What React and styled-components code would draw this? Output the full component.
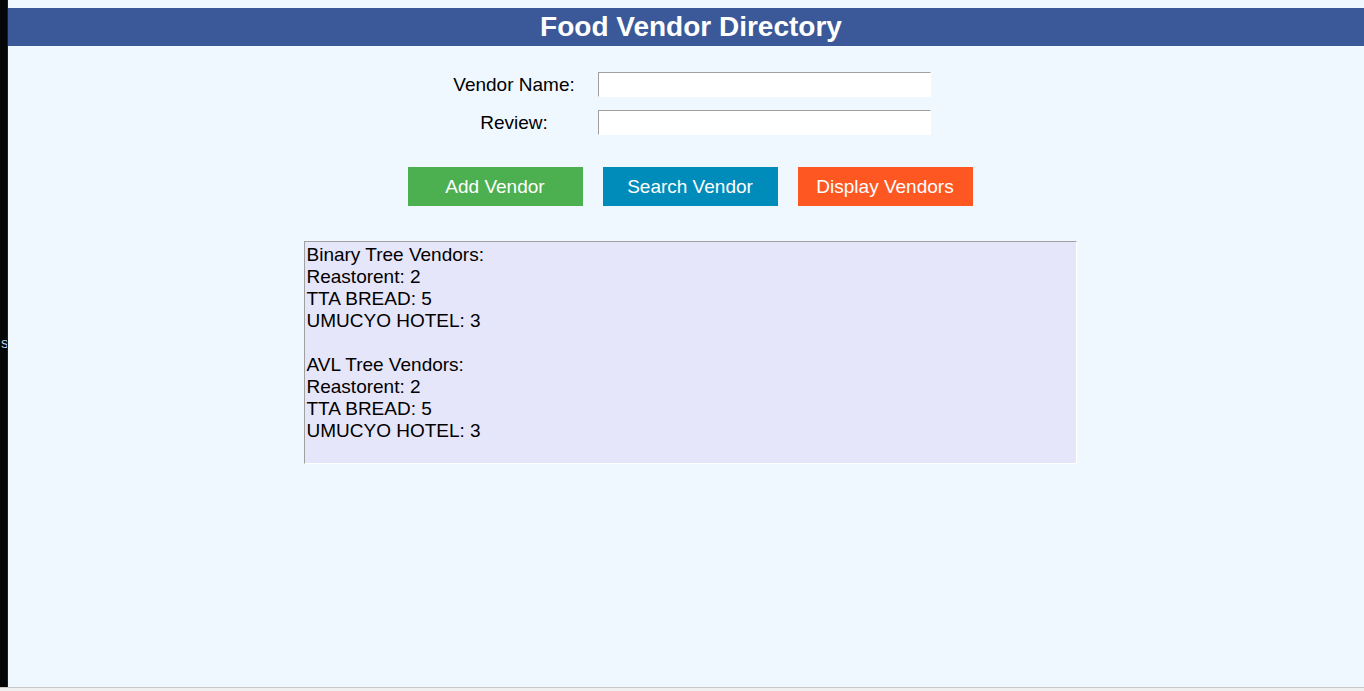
import React, { useState } from 'react';
import styled, { createGlobalStyle } from 'styled-components';

const GlobalStyle = createGlobalStyle`
  html, body {
    margin: 0;
    padding: 0;
    height: 691px;
    overflow: hidden;
    background: #f0f0f0;
  }
  body {
    font-family: "Liberation Sans", Arial, sans-serif;
  }
`;

const vendors = [
  { name: 'Reastorent', review: 2 },
  { name: 'TTA BREAD', review: 5 },
  { name: 'UMUCYO HOTEL', review: 3 },
];

const listing = (title) =>
  `${title}:\n` + vendors.map((v) => `${v.name}: ${v.review}`).join('\n');

function App() {
  const [name, setName] = useState('');
  const [review, setReview] = useState('');

  const output = `${listing('Binary Tree Vendors')}\n\n${listing('AVL Tree Vendors')}\n`;

  return (
    <>
      <GlobalStyle />
      <Window>
        <Body>
          <SideStrip>
            <span>S</span>
          </SideStrip>
          <Main>
            <Header>Food Vendor Directory</Header>
            <Form onSubmit={(e) => e.preventDefault()}>
              <Label htmlFor="vendor">Vendor Name:</Label>
              <Input
                id="vendor"
                value={name}
                onChange={(e) => setName(e.target.value)}
              />
              <Label htmlFor="review">Review:</Label>
              <Input
                id="review"
                value={review}
                onChange={(e) => setReview(e.target.value)}
              />
            </Form>
            <ButtonRow>
              <ActionButton $bg="#4caf50">Add Vendor</ActionButton>
              <ActionButton $bg="#008cba">Search Vendor</ActionButton>
              <ActionButton $bg="#ff5722">Display Vendors</ActionButton>
            </ButtonRow>
            <Output>{output}</Output>
          </Main>
        </Body>
        <BottomEdge />
      </Window>
    </>
  );
}

export default App;

const Window = styled.div`
  display: flex;
  flex-direction: column;
  width: 1364px;
  height: 691px;
`;

const Body = styled.div`
  display: flex;
  height: 687px;
`;

const SideStrip = styled.div`
  width: 8px;
  background: #050608;
  border-right: 1px solid #1e1f22;
  box-sizing: border-box;
  display: flex;
  align-items: center;
  overflow: hidden;
  span {
    font-size: 11px;
    color: #cfe3ff;
    margin-left: 1px;
  }
`;

const Main = styled.div`
  flex: 1;
  background: #f0f8ff;
  padding: 8px 0 0 8px;
  display: flex;
  flex-direction: column;
  align-items: center;
`;

const Header = styled.h1`
  align-self: stretch;
  margin: 0 0 0 -8px;
  height: 38px;
  background: #3b5998;
  color: #fff;
  font-size: 28px;
  font-weight: 700;
  line-height: 38px;
  text-align: center;
  padding-left: 10px;
`;

const Form = styled.form`
  display: grid;
  grid-template-columns: 126px 333px;
  column-gap: 21px;
  row-gap: 13px;
  align-items: center;
  margin-top: 26px;
  margin-left: 2px;
`;

const Label = styled.label`
  font-size: 19px;
  color: #000;
  text-align: center;
`;

const Input = styled.input`
  height: 25px;
  box-sizing: border-box;
  background: #fff;
  border: 1px solid #fff;
  border-top-color: #a0a0a0;
  border-left-color: #a0a0a0;
  font-family: "Liberation Sans", Arial, sans-serif;
  font-size: 16px;
  padding: 0 3px;
  outline: none;
`;

const ButtonRow = styled.div`
  display: flex;
  gap: 20px;
  margin-top: 32px;
`;

const ActionButton = styled.button`
  width: 175px;
  height: 39px;
  border: none;
  background: ${(p) => p.$bg};
  color: #fff;
  font-family: "Liberation Sans", Arial, sans-serif;
  font-size: 19px;
  padding: 0;
  cursor: pointer;
`;

const Output = styled.pre`
  width: 773px;
  height: 223px;
  box-sizing: border-box;
  margin: 35px 0 0;
  padding: 2px 2px;
  background: #e6e6fa;
  border: 1px solid #fff;
  border-top-color: #a0a0a0;
  border-left-color: #a0a0a0;
  font-family: "Liberation Sans", Arial, sans-serif;
  font-size: 19px;
  line-height: 22px;
  color: #000;
  white-space: pre-wrap;
  overflow: hidden;
`;

const BottomEdge = styled.div`
  height: 4px;
  border-top: 1px solid #c8c8c8;
  box-sizing: border-box;
  background: #f0f0f0;
`;
